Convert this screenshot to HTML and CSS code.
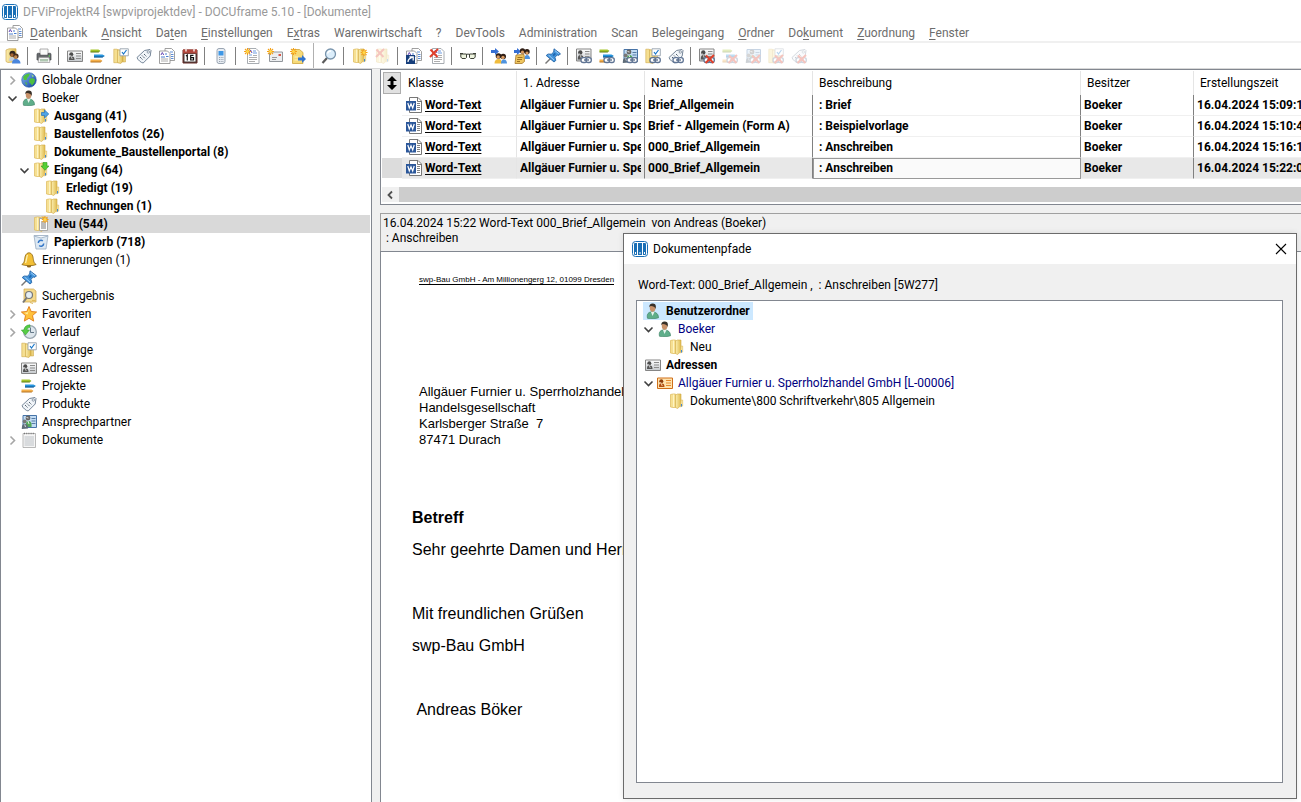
FILE: index.html
```html
<!DOCTYPE html>
<html lang="de">
<head>
  <meta charset="UTF-8" />
  <meta name="viewport" content="width=device-width, initial-scale=1.0"/>
  <title>DFViProjektR4 - DOCUframe 5.10</title>
  <link rel="stylesheet" href="styles.css">
</head>
<body>
  <!-- icon set, 16x16 -->
  <svg class="sprite" aria-hidden="true">
    <defs>
      <linearGradient id="gold" x1="0" x2="1"><stop offset="0" stop-color="#fbeeb0"/><stop offset="1" stop-color="#e0bb4e"/></linearGradient>
      <linearGradient id="sea" x1="0" x2="1" y2="1"><stop offset="0" stop-color="#8cc0f4"/><stop offset="1" stop-color="#0b3a9a"/></linearGradient>
      <linearGradient id="steel" y2="1" x2="0"><stop offset="0" stop-color="#fff"/><stop offset="1" stop-color="#c4c8cc"/></linearGradient>
    </defs>
    <symbol id="app" viewBox="0 0 16 16">
      <rect x=".5" y=".5" width="15" height="15" rx="3" fill="#fff" stroke="#1a6fb5"/>
      <path d="M2 3q0-1 1-1h2v12H3q-1 0-1-1zM6 2h4v12H6zM11 2h2q1 0 1 1v10q0 1-1 1h-2z" fill="#1a6fb5"/>
      <path d="M3 11h1v2H3zM7.500 11h1v2h-1zM12 11h1v2h-1z" fill="#fff"/>
    </symbol>
    <symbol id="folder" viewBox="0 0 16 16">
      <path d="M1.500 1.500 4 1h2.500v13.500H4l-2.500-.5z" fill="#f6e092" stroke="#dcb95a" stroke-width=".7"/>
      <path d="M4.500 1.500V14" stroke="#fdf3c4"/>
      <path d="M6.500 2 8.500 1h3.500v11.500l-3.500 3-2-1z" fill="url(#gold)" stroke="#d2aa45" stroke-width=".6"/>
      <path d="M12 7h1.700v6l-2.200 1z" fill="#f7e5a4" stroke="#d9b455" stroke-width=".5"/>
      <path d="M12.500 11v2.500" stroke="#3d87d6"/>
    </symbol>
    <symbol id="folder-out" viewBox="0 0 16 16">
      <use href="#folder"/>
      <path d="M8.500 4.500h3V2l4.300 4-4.300 4V7.500h-3z" fill="#4ea3e6" stroke="#2872b8" stroke-width=".7"/>
    </symbol>
    <symbol id="folder-in" viewBox="0 0 16 16">
      <use href="#folder"/>
      <path d="M10 .5h4v3.500h2L12 8.300 8 4h2z" fill="#55cf35" stroke="#2f9c1c" stroke-width=".6"/>
    </symbol>
    <symbol id="spark" viewBox="0 0 16 16">
      <path d="M3.500 0v7M0 3.500h7M1 1l5 5M6 1 1 6" stroke="#f3a21b" stroke-width="1.100"/>
      <circle cx="3.500" cy="3.500" r="1.500" fill="#ffd84a"/>
    </symbol>
    <symbol id="folder-doc" viewBox="0 0 16 16">
      <use href="#folder"/>
      <path d="M6.500 2.500h8v12h-8z" fill="#fff" stroke="#999" stroke-width=".8"/>
      <path d="M8 6h5M8 8h5M8 10h5M8 12h5" stroke="#555" stroke-width=".8"/>
      <use href="#spark" x="8.500" y="0"/>
    </symbol>
    <symbol id="folder-new" viewBox="0 0 16 16">
      <use href="#folder"/>
      <use href="#spark" x="8.500" y="1"/>
    </symbol>
    <symbol id="globe" viewBox="0 0 16 16">
      <circle cx="8" cy="8" r="7.300" fill="url(#sea)" stroke="#2a5cae" stroke-width=".6"/>
      <path d="M2 5c2-3 4-3.500 7-3.500L8 4 6.500 5.500l-1 2.500L3 8zM8.500 7l3-1 2.500 1.500-.5 3-2.500 3-1-1.500L8 10zM4 10l2 1-.5 2.500z" fill="#4fc040"/>
      <path d="M10.500 2.500 13 4l-1.500 1.200z" fill="#9be37c"/>
    </symbol>
    <symbol id="user" viewBox="0 0 16 16">
      <path d="M2.500 15.300c-1-4.500 1-6.300 4.500-6.500 4 .2 6.500 2 6.500 6-3.300 1.100-7.700 1.200-11 .5z" fill="#5fae8a" stroke="#327a5b" stroke-width=".6"/>
      <path d="m6 9 1.500 4L9.500 9z" fill="#e8f4ee"/>
      <ellipse cx="7.600" cy="5" rx="2.800" ry="3.800" fill="#c9926a"/>
      <path d="M4.300 4.500C4 1.500 5.600.2 8 .4c2.800.2 3.500 2.300 2.500 5.600C10 3.700 8 3 6 3c-.8 0-1 .5-1.700 1.500z" fill="#383028"/>
    </symbol>
    <symbol id="bin" viewBox="0 0 16 16">
      <path d="M1 1.500h14l-2 13.500H3z" fill="#dce8f3" stroke="#98abc0" stroke-width=".8"/>
      <path d="M1 2 8 4l7-2" fill="#f7fbff" stroke="#98abc0" stroke-width=".8"/>
      <path d="M5.300 9a2.700 2.700 0 0 1 4.500-2M10.700 9.500a2.700 2.700 0 0 1-4.500 2" fill="none" stroke="#3477c8" stroke-width="1.500"/>
    </symbol>
    <symbol id="bell" viewBox="0 0 16 16">
      <ellipse cx="8" cy="14" rx="2.200" ry="1.500" fill="#90651a"/>
      <path d="M.8 12.500C4 11 3.200 7 4.300 4 5 2 6.500.8 8 .8s3 1.200 3.700 3.200c1 3 .3 7 3.500 8.500-3 1.600-11.400 1.600-14.400 0z" fill="#f2bf36" stroke="#8a6414" stroke-width=".8"/>
      <path d="M6.500 3c-1 2-.8 5-2 8" stroke="#fff2b5" stroke-width="1.300" fill="none"/>
    </symbol>
    <symbol id="pin" viewBox="0 0 16 16">
      <path d="M.5 15.500 6 10" stroke="#777" stroke-width="1.400"/>
      <path d="m9 .8 6.500 5L14 7.300l-1.800-.3-2.200 2.300.8 3.200L9 14 1.200 7.500 3 6l3.300.2L8.700 4z" fill="#4596dc" stroke="#1c5c9f" stroke-width=".8"/>
      <path d="m9.800 2.500 4 3.200M3.500 7l5.500 5" stroke="#aad6fa" stroke-width=".9"/>
      <path d="m7.500 7 2-2.200 1.500 1.200-2.200 2.500z" fill="#1f69b4"/>
    </symbol>
    <symbol id="search-folder" viewBox="0 0 16 16">
      <path d="M3 1h9.500l2.500 2v11H3z" fill="#f4d98b" stroke="#cfa64a" stroke-width=".7"/>
      <path d="M5.500 10 2 14.500" stroke="#777" stroke-width="2"/>
      <circle cx="8" cy="7" r="3.500" fill="#e4eef5" stroke="#777" stroke-width="1.200"/>
      <path d="M11 12.500h3.500M9 14.500l3 1" stroke="#dfb95c"/>
    </symbol>
    <symbol id="star" viewBox="0 0 16 16">
      <path d="m8 .5 2.200 5 5.400.5-4.100 3.600 1.200 5.500L8 12.300l-4.700 2.800 1.200-5.500L.4 6l5.400-.5z" fill="#ffc13b" stroke="#e07a14" stroke-width=".9"/>
      <path d="M8 3 6.500 6.500l-3.200.3 3.200 1.700z" fill="#fff0a6"/>
    </symbol>
    <symbol id="history" viewBox="0 0 16 16">
      <circle cx="9" cy="8" r="6.300" fill="#dde6ec" stroke="#99a6b0" stroke-width="1.300"/>
      <path d="M9.500 3.500v5H13" fill="none" stroke="#647888"/>
      <path d="M9 .8C5 1 3.500 3 3 6H.3L4.500 11l4-5H6c.2-1.500 1.200-2.500 3-2.700z" fill="#56cc45" stroke="#359c2a" stroke-width=".5"/>
    </symbol>
    <symbol id="process" viewBox="0 0 16 16">
      <path d="M.8 1.200H4l2 1v12.500H.8z" fill="#f5df91" stroke="#d0aa4a" stroke-width=".6"/>
      <path d="M4.500 2h5.500v11.500l-2.500 2-3-1z" fill="url(#gold)" stroke="#c9a13c" stroke-width=".6"/>
      <path d="M10 7.500h2.500v6.500H10z" fill="#ecd17a" stroke="#c9a13c" stroke-width=".5"/>
      <path d="M7 .8h8.300v7H7z" fill="#fff" stroke="#96a2ad" stroke-width=".9"/>
      <path d="m9 4 1.500 2L13.500 2" fill="none" stroke="#1876c9" stroke-width="1.200"/>
    </symbol>
    <symbol id="card" viewBox="0 0 16 16">
      <path d="M.5 3h15v10.500H.5z" fill="url(#steel)" stroke="#858585"/>
      <circle cx="4.300" cy="6.300" r="2" fill="#4c4c4c"/>
      <path d="M2 12c0-4 1.500-4 3-3.500 1.800 0 2.500 1 2.500 3.500z" fill="#555"/>
      <path d="m3.500 7 1.800 4" stroke="#ddd" stroke-width=".8"/>
      <path d="M9 5.500h5M9 8h5M9 10.500h5" stroke="#8b8b8b"/>
    </symbol>
    <symbol id="card-orange" viewBox="0 0 16 16">
      <path d="M.5 3h15v10.500H.5z" fill="#ffe3ae" stroke="#cf6f19"/>
      <circle cx="4.300" cy="6.300" r="2" fill="#8d3d0b"/>
      <path d="M2 12c0-4 1.500-4 3-3.500 1.800 0 2.500 1 2.500 3.500z" fill="#b14f10"/>
      <path d="m3.500 7 1.800 4" stroke="#ffe9c8" stroke-width=".8"/>
      <path d="M9 5.500h5M9 8h5M9 10.500h5" stroke="#e58a2c"/>
    </symbol>
    <symbol id="gantt" viewBox="0 0 16 16">
      <path d="M.5 1.500h8l2 1.500-2 1H.5z" fill="#a6c52a"/><path d="M.5 4h8l1-.8" stroke="#5c7a10" fill="none"/>
      <path d="M4 6.500h8.500L15 8l-2.500 1.200H4z" fill="#2596e0"/><path d="M4 9h8.500l1-.8" stroke="#0d4c84" fill="none"/>
      <path d="M.5 11.500h10l2 1.500-2 1H.5z" fill="#f5b04a"/><path d="M.5 14h10l1-.8" stroke="#b47320" fill="none"/>
    </symbol>
    <symbol id="tag" viewBox="0 0 16 16">
      <path d="m1 9.500 7.500-7L14 1.500l1 1-.8 5.500-7 7c-1.700 0-6-3.500-6.200-5.500z" fill="#f1f5f9" stroke="#66788c" stroke-width=".9"/>
      <circle cx="12.300" cy="4" r="1.200" fill="#fff" stroke="#66788c" stroke-width=".7"/>
      <path d="m4 9 3 3M6 7.500l3 3M8 6l2.500 2.500" stroke="#435261" stroke-dasharray="1.300 .7"/>
    </symbol>
    <symbol id="contact" viewBox="0 0 16 16">
      <path d="M2 1.500h13.500v12H2z" fill="#c2dcf4" stroke="#4774a8"/>
      <path d="M10.500 4.500h4M10.500 7h4M10.500 9.500h4" stroke="#577ca5"/>
      <circle cx="7" cy="4" r="2.400" fill="#666"/>
      <circle cx="3.700" cy="7.500" r="2" fill="#777"/>
      <path d="M4.500 13c0-4 1-6 3-6s3.500 1.500 3 6z" fill="#55a85b"/>
      <path d="M.8 15c0-4 1-5 3-5s3.300 1 3.300 4.500z" fill="#5d6b78"/>
      <path d="m7 7 1 3M3.700 10.500l.8 2.500M5.500 3.500l2 .5" stroke="#fff" stroke-width=".8"/>
    </symbol>
    <symbol id="notepad" viewBox="0 0 16 16">
      <path d="M2 1.500h12.500v14H2z" fill="#f5f5f5" stroke="#a7a7a7" stroke-width=".8"/>
      <path d="M3.500 5h9.500M3.500 7h9.500M3.500 9h9.500M3.500 11h9.500M3.500 13h9.500" stroke="#b7bcc2" stroke-width=".9"/>
      <path d="M3 1.500h11" stroke="#777" stroke-width="1.500" stroke-dasharray="1 1.200"/>
    </symbol>
    <symbol id="doc" viewBox="0 0 16 16">
      <path d="M.5.5h8.500l3 3v12H.5z" fill="#fff" stroke="#92989e" stroke-width=".8"/>
      <path d="m2 5 1.500-3L5 5" fill="none" stroke="#6849b6"/>
      <path d="M6 3h3M6 5h4M2 7h3" stroke="#6c9be0"/><path d="M6 7.500h4M2 9.500h8M2 11.500h8M2 13.500h6" stroke="#999" stroke-width=".8"/>
    </symbol>
    <symbol id="docs" viewBox="0 0 16 16">
      <path d="M6 .5h6.500l3 3v9H6z" fill="#fff" stroke="#888" stroke-width=".8"/>
      <path d="M11 4h3M12 6.500h2.500M12 8.500h2.500M12 10.500h2.500" stroke="#4a7fd0" stroke-width=".9"/>
      <path d="M.5 3h8l2.500 2.500v10H.5z" fill="#fff" stroke="#888" stroke-width=".8"/>
      <path d="m2 7 1.300-2.500L4.700 7" fill="none" stroke="#6646b3"/>
      <path d="M6 6h2M2 9h4M7 8.500h2.500" stroke="#4a7fd0"/><path d="M2 11h7M2 13h7" stroke="#999" stroke-width=".8"/>
    </symbol>
    <symbol id="calendar" viewBox="0 0 16 16">
      <path d="M1 2h14v13H1z" fill="#453a38" stroke="#682c28"/>
      <path d="M1 1.500h14v4H1z" fill="#b0463c"/>
      <path d="M4 .5v3M12 .5v3" stroke="#f8e7e3" stroke-width="1.500"/>
      <path d="M2.500 6h11v7.500h-11z" fill="#fff"/>
      <path d="m4 8 1.300-1v5.500M11.500 7.300H8.700v4.700h2.800V9.700H9" fill="none" stroke="#111" stroke-width="1.200"/>
    </symbol>
    <symbol id="phone" viewBox="0 0 16 16">
      <rect x="4" y=".5" width="8" height="15" rx="2" fill="#e8edf3" stroke="#9aa5b2"/>
      <path d="M5.500 3h5v4.500h-5z" fill="#3e97e5"/>
      <path d="M6 9.500h4.500M6 11.500h4.500M6 13.500h4.500" stroke="#98a3af" stroke-dasharray="1 .7"/>
    </symbol>
    <symbol id="printer" viewBox="0 0 16 16">
      <path d="M4 1h8v6H4z" fill="#fafafa" stroke="#999" stroke-width=".8"/>
      <path d="M1 6.500C1 5 2 5 4 5.500v2h8v-2c2-.5 3-.5 3 1V12H1z" fill="#686b6e" stroke="#45484b" stroke-width=".7"/>
      <path d="M3 9.500h10l.8 5H2.200z" fill="#f4f4f4" stroke="#999" stroke-width=".7"/>
      <path d="M4 11h8v2.500H4z" fill="#aec7b0"/><circle cx="13.300" cy="8" r=".8" fill="#60d35a"/>
    </symbol>
    <symbol id="user-folder" viewBox="0 0 16 16">
      <path d="M1 2 4 .8h7v13l-8 .7-2-1z" fill="url(#gold)" stroke="#d0ab50" stroke-width=".7"/>
      <circle cx="7.500" cy="5.800" r="3" fill="#33261e"/><circle cx="7" cy="7" r="1.800" fill="#a86835"/>
      <path d="M4 13c0-3 1-4 3-4s4 1 4 4z" fill="#c6cdd4"/>
      <circle cx="11" cy="8" r="2.600" fill="#4a3020"/><circle cx="10.700" cy="9" r="1.700" fill="#c38950"/>
      <path d="M7 15.500c0-3 1.500-4.500 4-4.500s4.500 1.500 4.500 4.500z" fill="#4a86dd"/>
    </symbol>
    <symbol id="new-doc" viewBox="0 0 16 16">
      <use href="#doc" x="3" y="0"/><use href="#spark"/>
    </symbol>
    <symbol id="new-mail" viewBox="0 0 16 16">
      <path d="M2.500 4h13v9.500h-13z" fill="#eceef0" stroke="#92979c"/>
      <path d="M11.500 6h2.500v2h-2.500z" fill="#d85746"/><path d="M5 9.500h5M5 11.500h4" stroke="#999"/>
      <use href="#spark"/>
    </symbol>
    <symbol id="new-move" viewBox="0 0 16 16">
      <path d="M2.500 1.500h7l3.500 3v11H2.500z" fill="#f6da78" stroke="#cfa63c" stroke-width=".8"/><path d="M4.500 9h4M4.500 12h6" stroke="#fff2b8"/>
      <path d="M8 9.500h4V7l4 4-4 4v-2.500H8z" fill="#3274ce"/>
      <use href="#spark"/>
    </symbol>
    <symbol id="lens" viewBox="0 0 16 16">
      <path d="M6 10 1.500 15" stroke="#5b5b5b" stroke-width="2.200"/>
      <circle cx="9.500" cy="6" r="5" fill="#dceefb" stroke="#7994ac" stroke-width="1.300"/>
      <path d="M6.500 5.500C7 3.500 8.500 3 10 3" fill="none" stroke="#fff" stroke-width="1.300"/>
    </symbol>
    <symbol id="redx" viewBox="0 0 16 16">
      <path d="m1.500 1.500 7 7.500M9 1 1 9" stroke="#e0402b" stroke-width="2"/>
    </symbol>
    <symbol id="folder-del" viewBox="0 0 16 16">
      <use href="#folder"/><use href="#redx"/>
    </symbol>
    <symbol id="docs-link" viewBox="0 0 16 16">
      <use href="#docs"/>
      <path d="M0 7h9v9H0z" fill="#173f7c"/><path d="M2 14c0-2.500 1-3 4.500-5M3.500 8.800h3.700v3.700" fill="none" stroke="#fff" stroke-width="1.300"/>
    </symbol>
    <symbol id="docs-del" viewBox="0 0 16 16">
      <use href="#doc" x="3"/><use href="#redx"/>
    </symbol>
    <symbol id="glasses" viewBox="0 0 16 16">
      <path d="M0 5.500h3M13 5.500h3M6.500 6.500q1.500-1 3 0" fill="none" stroke="#3c4036"/>
      <path d="M.8 6h5.700v3.500l-1 1H2L.8 9zM9.500 6h5.700v3l-1.200 1.500h-3.500l-1-1z" fill="#eef4df" stroke="#3c4036"/>
    </symbol>
    <symbol id="people" viewBox="0 0 16 16">
      <path d="M0 2h4V0l4 3.500L4 7V5H0z" fill="#366fd3"/>
      <circle cx="7.500" cy="8" r="2.800" fill="#2e1d14"/><circle cx="12.200" cy="8.500" r="2.800" fill="#2e1d14"/>
      <circle cx="7.200" cy="9" r="1.700" fill="#d79a62"/><circle cx="12" cy="9.500" r="1.700" fill="#d79a62"/>
      <path d="M3.500 15.500c0-3 1.500-4.500 4-4.500s3.500 2 3.500 4.500z" fill="#f0bc3d"/><path d="M10 15.500c0-3 1-4 3-4s3 2 3 4z" fill="#4e93df"/>
    </symbol>
    <symbol id="people-doc" viewBox="0 0 16 16">
      <path d="M0 2h3V0l4 3.500L3 7V5H0z" fill="#366fd3"/>
      <circle cx="8.500" cy="3" r="2.700" fill="#2e1d14"/><circle cx="13" cy="3.800" r="2.700" fill="#2e1d14"/>
      <circle cx="8.500" cy="4.200" r="1.600" fill="#d79a62"/><circle cx="13" cy="5" r="1.600" fill="#d79a62"/>
      <path d="M10.500 11c0-3 1-4 2.500-4s3 1.500 3 4z" fill="#4e93df"/>
      <path d="m2 7 8-.5.5 7L8 15.500H1z" fill="#eec55e" stroke="#a8792a" stroke-width=".8"/>
      <path d="M3.500 9.500h5M3 11.500h5M3 13.500h3" stroke="#94671e" stroke-width=".9"/>
    </symbol>
    <symbol id="chain" viewBox="0 0 16 16">
      <rect x="5" y="9.700" width="6" height="4.800" rx="2.200" fill="#fff" stroke="#5f7494" stroke-width="1.300"/>
      <rect x="10" y="9.700" width="5.300" height="4.800" rx="2.200" fill="#fff" stroke="#5f7494" stroke-width="1.300"/>
      <path d="M8 12h5" stroke="#4f6586" stroke-width="1.300"/>
    </symbol>
    <symbol id="cross" viewBox="0 0 16 16">
      <path d="m7 7.500 7.500 7.500M15 7l-8.500 8" stroke="#e0402b" stroke-width="2"/>
    </symbol>
    <symbol id="card-tall" viewBox="0 0 16 16">
      <path d="M.5 1h14.500v12H.5z" fill="url(#steel)" stroke="#858585"/>
      <circle cx="4.300" cy="4.500" r="2.200" fill="#4c4c4c"/>
      <path d="M1.800 11.500c0-4.500 1.500-4.700 3.200-4.200 1.800 0 2.700 1.200 2.700 4.200z" fill="#555"/>
      <path d="m3.500 5.500 1.800 4.500" stroke="#ddd" stroke-width=".8"/>
      <path d="M9 3.500h4.500M9 6h4.500M9 8.500h4.500" stroke="#8b8b8b"/>
    </symbol>
    <symbol id="word" viewBox="0 0 16 16">
      <path d="M3.500.5h8.500l3.500 3.500v11.500h-12z" fill="#fff" stroke="#777"/>
      <path d="M11.500.5v4h4" fill="none" stroke="#777"/>
      <path d="M11 6.500h3M11 8.500h3M11 10.500h3M11 12.500h3" stroke="#777" stroke-width=".9"/>
      <path d="M0 4h10v9.500H0z" fill="#2b579a"/>
      <path d="m1.800 6 1.500 5L5 6.800 6.700 11l1.500-5" fill="none" stroke="#fff" stroke-width="1.200"/>
    </symbol>
    <symbol id="right" viewBox="0 0 16 16"><path d="m5.500 4.500 4 4-4 4" fill="none" stroke="#a6a6a6" stroke-width="1.600"/></symbol>
    <symbol id="down" viewBox="0 0 16 16"><path d="m3.500 6.500 4 4 4-4" fill="none" stroke="#404040" stroke-width="1.600"/></symbol>
  </svg>

  <div class="app">
    <header class="titlebar">
      <svg class="icon"><use href="#app"/></svg>
      <span>DFViProjektR4 [swpviprojektdev] - DOCUframe 5.10 - [Dokumente]</span>
    </header>

    <nav class="menubar" aria-label="Hauptmenü">
      <svg class="icon"><use href="#docs"/></svg>
      <button><u>D</u>atenbank</button>
      <button><u>A</u>nsicht</button>
      <button>Da<u>t</u>en</button>
      <button><u>E</u>instellungen</button>
      <button>E<u>x</u>tras</button>
      <button>Warenwirtschaft</button>
      <button>?</button>
      <button>DevTools</button>
      <button>Administration</button>
      <button>Scan</button>
      <button>Belegeingang</button>
      <button><u>O</u>rdner</button>
      <button>Do<u>k</u>ument</button>
      <button><u>Z</u>uordnung</button>
      <button><u>F</u>enster</button>
    </nav>

    <div class="toolbar" role="toolbar" aria-label="Werkzeuge">
      <button aria-label="Benutzerordner"><svg class="icon"><use href="#user-folder"/></svg></button>
      <i class="sep"></i>
      <button aria-label="Drucken"><svg class="icon"><use href="#printer"/></svg></button>
      <i class="sep"></i>
      <button aria-label="Adressen"><svg class="icon"><use href="#card"/></svg></button>
      <button aria-label="Projekte"><svg class="icon"><use href="#gantt"/></svg></button>
      <button aria-label="Vorgänge"><svg class="icon"><use href="#process"/></svg></button>
      <button aria-label="Produkte"><svg class="icon"><use href="#tag"/></svg></button>
      <button aria-label="Dokumente"><svg class="icon"><use href="#docs"/></svg></button>
      <button aria-label="Kalender"><svg class="icon"><use href="#calendar"/></svg></button>
      <i class="sep"></i>
      <button aria-label="Telefon"><svg class="icon"><use href="#phone"/></svg></button>
      <i class="sep"></i>
      <button aria-label="Neues Dokument"><svg class="icon"><use href="#new-doc"/></svg></button>
      <button aria-label="Neue Nachricht"><svg class="icon"><use href="#new-mail"/></svg></button>
      <button aria-label="Neue Weiterleitung"><svg class="icon"><use href="#new-move"/></svg></button>
      <i class="sep split"></i>
      <button aria-label="Suchen"><svg class="icon"><use href="#lens"/></svg></button>
      <i class="sep"></i>
      <button aria-label="Neuer Ordner"><svg class="icon"><use href="#folder-new"/></svg></button>
      <button aria-label="Ordner löschen" disabled><svg class="icon"><use href="#folder-del"/></svg></button>
      <i class="sep"></i>
      <button aria-label="Dokument verknüpfen"><svg class="icon"><use href="#docs-link"/></svg></button>
      <button aria-label="Dokument löschen"><svg class="icon"><use href="#docs-del"/></svg></button>
      <i class="sep"></i>
      <button aria-label="Ansehen"><svg class="icon"><use href="#glasses"/></svg></button>
      <i class="sep"></i>
      <button aria-label="Weiterleiten"><svg class="icon"><use href="#people"/></svg></button>
      <button aria-label="Verteilen"><svg class="icon"><use href="#people-doc"/></svg></button>
      <i class="sep"></i>
      <button aria-label="Anheften"><svg class="icon"><use href="#pin"/></svg></button>
      <i class="sep"></i>
      <button aria-label="Adresse zuordnen"><svg class="icon"><use href="#card-tall"/><use href="#chain"/></svg></button>
      <button aria-label="Projekt zuordnen"><svg class="icon"><use href="#gantt"/><use href="#chain"/></svg></button>
      <button aria-label="Ansprechpartner zuordnen"><svg class="icon"><use href="#contact"/><use href="#chain"/></svg></button>
      <button aria-label="Vorgang zuordnen"><svg class="icon"><use href="#process"/><use href="#chain"/></svg></button>
      <button aria-label="Produkt zuordnen"><svg class="icon"><use href="#tag"/><use href="#chain"/></svg></button>
      <i class="sep"></i>
      <button aria-label="Adresse lösen"><svg class="icon"><use href="#card-tall"/><use href="#chain"/><use href="#cross"/></svg></button>
      <button aria-label="Projekt lösen" disabled><svg class="icon"><use href="#gantt"/><use href="#chain"/><use href="#cross"/></svg></button>
      <button aria-label="Ansprechpartner lösen" disabled><svg class="icon"><use href="#contact"/><use href="#chain"/><use href="#cross"/></svg></button>
      <button aria-label="Vorgang lösen" disabled><svg class="icon"><use href="#process"/><use href="#chain"/><use href="#cross"/></svg></button>
      <button aria-label="Produkt lösen" disabled><svg class="icon"><use href="#tag"/><use href="#chain"/><use href="#cross"/></svg></button>
    </div>

    <main class="workspace">
      <aside class="sidebar">
        <ul class="tree">
          <li><button class="toggle" aria-label="Öffnen"><svg class="icon"><use href="#right"/></svg></button><svg class="icon"><use href="#globe"/></svg><span>Globale Ordner</span></li>
          <li><button class="toggle" aria-label="Schließen"><svg class="icon"><use href="#down"/></svg></button><svg class="icon"><use href="#user"/></svg><span>Boeker</span></li>
          <li class="lvl-1 unread"><svg class="icon"><use href="#folder-out"/></svg><span>Ausgang (41)</span></li>
          <li class="lvl-1 unread"><svg class="icon"><use href="#folder"/></svg><span>Baustellenfotos (26)</span></li>
          <li class="lvl-1 unread"><svg class="icon"><use href="#folder"/></svg><span>Dokumente_Baustellenportal (8)</span></li>
          <li class="lvl-1 unread"><button class="toggle" aria-label="Schließen"><svg class="icon"><use href="#down"/></svg></button><svg class="icon"><use href="#folder-in"/></svg><span>Eingang (64)</span></li>
          <li class="lvl-2 unread"><svg class="icon"><use href="#folder"/></svg><span>Erledigt (19)</span></li>
          <li class="lvl-2 unread"><svg class="icon"><use href="#folder"/></svg><span>Rechnungen (1)</span></li>
          <li class="lvl-1 unread selected"><svg class="icon"><use href="#folder-doc"/></svg><span>Neu (544)</span></li>
          <li class="lvl-1 unread"><svg class="icon"><use href="#bin"/></svg><span>Papierkorb (718)</span></li>
          <li><svg class="icon"><use href="#bell"/></svg><span>Erinnerungen (1)</span></li>
          <li><svg class="icon"><use href="#pin"/></svg></li>
          <li><svg class="icon"><use href="#search-folder"/></svg><span>Suchergebnis</span></li>
          <li><button class="toggle" aria-label="Öffnen"><svg class="icon"><use href="#right"/></svg></button><svg class="icon"><use href="#star"/></svg><span>Favoriten</span></li>
          <li><button class="toggle" aria-label="Öffnen"><svg class="icon"><use href="#right"/></svg></button><svg class="icon"><use href="#history"/></svg><span>Verlauf</span></li>
          <li><svg class="icon"><use href="#process"/></svg><span>Vorgänge</span></li>
          <li><svg class="icon"><use href="#card"/></svg><span>Adressen</span></li>
          <li><svg class="icon"><use href="#gantt"/></svg><span>Projekte</span></li>
          <li><svg class="icon"><use href="#tag"/></svg><span>Produkte</span></li>
          <li><svg class="icon"><use href="#contact"/></svg><span>Ansprechpartner</span></li>
          <li><button class="toggle" aria-label="Öffnen"><svg class="icon"><use href="#right"/></svg></button><svg class="icon"><use href="#notepad"/></svg><span>Dokumente</span></li>
        </ul>
      </aside>

      <section class="content">
        <div class="list">
          <table>
            <colgroup>
              <col class="c-mark"><col class="c-class"><col class="c-address"><col class="c-name"><col class="c-desc"><col class="c-owner"><col>
            </colgroup>
            <thead>
              <tr>
                <th><button class="sort" aria-label="Sortieren"><svg viewBox="0 0 16 20"><path d="M8 3l5 5H9.500v4H13l-5 5-5-5h3.500V8H3z"/></svg></button></th>
                <th>Klasse</th>
                <th>1. Adresse</th>
                <th>Name</th>
                <th>Beschreibung</th>
                <th>Besitzer</th>
                <th>Erstellungszeit</th>
              </tr>
            </thead>
            <tbody>
              <tr>
                <td></td>
                <td><div class="doc-link"><svg class="icon"><use href="#word"/></svg><a href="#">Word-Text</a></div></td>
                <td><div class="clip">Allgäuer Furnier u. Spe</div></td>
                <td>Brief_Allgemein</td>
                <td>: Brief</td>
                <td>Boeker</td>
                <td>16.04.2024 15:09:1</td>
              </tr>
              <tr>
                <td></td>
                <td><div class="doc-link"><svg class="icon"><use href="#word"/></svg><a href="#">Word-Text</a></div></td>
                <td><div class="clip">Allgäuer Furnier u. Spe</div></td>
                <td>Brief - Allgemein (Form A)</td>
                <td>: Beispielvorlage</td>
                <td>Boeker</td>
                <td>16.04.2024 15:10:4</td>
              </tr>
              <tr>
                <td></td>
                <td><div class="doc-link"><svg class="icon"><use href="#word"/></svg><a href="#">Word-Text</a></div></td>
                <td><div class="clip">Allgäuer Furnier u. Spe</div></td>
                <td>000_Brief_Allgemein</td>
                <td>: Anschreiben</td>
                <td>Boeker</td>
                <td>16.04.2024 15:16:1</td>
              </tr>
              <tr class="current">
                <td></td>
                <td><div class="doc-link"><svg class="icon"><use href="#word"/></svg><a href="#">Word-Text</a></div></td>
                <td><div class="clip">Allgäuer Furnier u. Spe</div></td>
                <td>000_Brief_Allgemein</td>
                <td class="focus">: Anschreiben</td>
                <td>Boeker</td>
                <td>16.04.2024 15:22:0</td>
              </tr>
            </tbody>
          </table>
          <div class="scrollbar">
            <button aria-label="Nach links"><svg class="icon" viewBox="0 0 16 16"><path d="M10 4.500 6.500 8l3.500 3.500" fill="none" stroke="#505050" stroke-width="1.800"/></svg></button>
            <div class="thumb"></div>
          </div>
        </div>

        <div class="info">
          <p>16.04.2024 15:22 Word-Text 000_Brief_Allgemein&nbsp; von Andreas (Boeker)</p>
          <p>&nbsp;: Anschreiben</p>
        </div>

        <article class="letter">
          <p class="sender">swp-Bau GmbH - Am Millionengerg 12, 01099 Dresden</p>
          <address>
            Allgäuer Furnier u. Sperrholzhandel<br>
            Handelsgesellschaft<br>
            Karlsberger Straße&nbsp; 7<br>
            87471 Durach
          </address>
          <h2>Betreff</h2>
          <p class="greeting">Sehr geehrte Damen und Herren,</p>
          <p>Mit freundlichen Grüßen</p>
          <p class="company">swp-Bau GmbH</p>
          <p>&nbsp;Andreas Böker</p>
        </article>
      </section>
    </main>

    <div class="dialog" role="dialog" aria-labelledby="dialog-title">
      <header>
        <svg class="icon"><use href="#app"/></svg>
        <span id="dialog-title">Dokumentenpfade</span>
        <button aria-label="Schließen"><svg viewBox="0 0 12 12"><path d="m1 1 10 10M11 1 1 11" stroke="#000" stroke-width="1.100"/></svg></button>
      </header>
      <div class="dialog-body">
        <p>Word-Text: 000_Brief_Allgemein ,&nbsp; : Anschreiben [5W277]</p>
        <ul class="tree paths">
          <li class="group marked"><svg class="icon"><use href="#user"/></svg><span>Benutzerordner</span></li>
          <li class="owner"><button class="toggle" aria-label="Schließen"><svg class="icon"><use href="#down"/></svg></button><svg class="icon"><use href="#user"/></svg><span>Boeker</span></li>
          <li class="lvl-1"><svg class="icon"><use href="#folder"/></svg><span>Neu</span></li>
          <li class="group"><svg class="icon"><use href="#card"/></svg><span>Adressen</span></li>
          <li class="owner"><button class="toggle" aria-label="Schließen"><svg class="icon"><use href="#down"/></svg></button><svg class="icon"><use href="#card-orange"/></svg><span>Allgäuer Furnier u. Sperrholzhandel GmbH [L-00006]</span></li>
          <li class="lvl-1"><svg class="icon"><use href="#folder"/></svg><span>Dokumente\800 Schriftverkehr\805 Allgemein</span></li>
        </ul>
      </div>
    </div>
  </div>
</body>
</html>
```
FILE: styles.css
```css
* {
  box-sizing: border-box;
}

body {
  margin: 0;
  font-family: Roboto, "Open Sans", sans-serif;
  font-size: 12px;
  line-height: 18px;
  color: #000;
  background: #f0f0f0;
  overflow: hidden;
}

p, h2, ul {
  margin: 0;
  padding: 0;
}

button {
  border: 0;
  padding: 0;
  background: none;
  font: inherit;
  color: inherit;
}

.sprite {
  position: absolute;
  width: 0;
  height: 0;
}

.icon {
  width: 16px;
  height: 16px;
  flex: none;
  display: block;
}

.app {
  position: relative;
  display: flex;
  flex-direction: column;
  height: 100vh;
}

.titlebar {
  display: flex;
  align-items: center;
  gap: 5px;
  height: 24px;
  padding-left: 2px;
  background: #fff;
  color: #999;
}

/* menu and toolbar */
.menubar {
  display: flex;
  align-items: center;
  gap: 14px;
  height: 19px;
  padding-left: 7px;
  background: #fff;
  border-bottom: 2px solid #f0f0f0;
  color: #6d6d6d;
  white-space: nowrap;
}

.menubar .icon {
  margin-right: -7px;
}

.menubar u {
  text-underline-offset: 2px;
}

.toolbar {
  display: flex;
  align-items: center;
  height: 26px;
  padding-left: 2px;
  background: #fff;
  border-bottom: 1px solid #d8d8d8;
}

.toolbar button {
  width: 23px;
  padding-left: 3px;
}

.toolbar button:disabled {
  opacity: 0.3;
}

.sep {
  width: 6px;
  height: 18px;
  margin-left: 2px;
  border-left: 1px solid #808080;
}

.sep.split {
  width: 5px;
  height: 25px;
  margin-left: 3px;
  border-color: #b0b0b0;
}

/* folder tree */
.workspace {
  flex: 1;
  display: flex;
  gap: 8px;
  min-height: 0;
}

.sidebar {
  width: 372px;
  flex: none;
  padding: 1px;
  background: #fff;
  border: 1px solid #828790;
  border-bottom: 0;
}

.tree {
  list-style: none;
}

.tree li {
  display: flex;
  align-items: center;
  height: 18px;
  padding-left: 19px;
  white-space: nowrap;
}

.tree .lvl-1 {
  padding-left: 31px;
}

.tree .lvl-2 {
  padding-left: 43px;
}

.tree span {
  margin-left: 5px;
}

.toggle {
  width: 16px;
  margin-left: -16px;
}

.unread {
  font-weight: bold;
}

.selected {
  background: #d9d9d9;
}

/* document list */
.content {
  flex: 1;
  min-width: 0;
  display: flex;
  flex-direction: column;
}

.list {
  background: #fff;
  border: 1px solid #828790;
  border-right: 0;
  padding: 1px 0 2px 1px;
  margin-bottom: 8px;
}

table {
  width: 100%;
  table-layout: fixed;
  border-collapse: separate;
  border-spacing: 0;
}

.c-mark { width: 20px; }
.c-class { width: 115px; }
.c-address { width: 128px; }
.c-name { width: 168px; }
.c-desc { width: 268px; }
.c-owner { width: 113px; }

th {
  height: 24px;
  padding: 0 0 0 6px;
  border-right: 1px solid #e5e5e5;
  font-weight: normal;
  text-align: left;
  white-space: nowrap;
}

th:first-child {
  padding: 0 0 0 1px;
  border-right: 0;
}

.sort {
  display: block;
  width: 18px;
  height: 22px;
  background: #e1e1e1;
  border: 1px solid #adadad;
}

.sort svg {
  display: block;
  width: 16px;
  height: 20px;
}

td {
  height: 21px;
  padding: 0 3px;
  border-right: 1px solid #808080;
  border-bottom: 1px solid #f0f0f0;
  font-weight: bold;
  white-space: nowrap;
}

td:first-child {
  border-right: 0;
  border-bottom-color: #fff;
}

td:nth-child(2) {
  padding-left: 4px;
  border-right-color: #e5e5e5;
}

td:nth-child(5) {
  padding-left: 6px;
}

th:last-child,
td:last-child {
  border-right: 0;
}

.current td {
  background: #e8e8e8;
}

.current td:first-child {
  background: #dcdcdc;
}

.current .focus {
  background: #fafafa;
  outline: 1px solid #999;
  outline-offset: -1px;
}

.doc-link {
  display: flex;
  align-items: center;
  gap: 3px;
}

.doc-link a {
  color: #000;
  text-underline-offset: 2px;
}

.clip {
  overflow: hidden;
}

.scrollbar {
  display: flex;
  height: 15px;
  margin-top: 8px;
}

.scrollbar button {
  width: 17px;
  background: #f0f0f0;
}

.thumb {
  flex: 1;
  background: #cdcdcd;
}

/* preview */
.info {
  padding: 2px 2px 5px;
  border: 1px solid #a0a0a0;
  border-width: 1px 0 0 1px;
  line-height: 15px;
}

.letter {
  flex: 1;
  padding: 23px 0 0 31px;
  background: #fff;
  border: 1px solid #828790;
  border-width: 1px 0 0 1px;
  font-family: "Liberation Sans", Arial, sans-serif;
  font-size: 16px;
  line-height: 32px;
}

.sender {
  width: max-content;
  margin-left: 7px;
  border-bottom: 1px solid #000;
  font-size: 8px;
  line-height: 9px;
}

address {
  margin: 99px 0 54px 7px;
  font-size: 13px;
  font-style: normal;
  line-height: 16px;
}

h2 {
  font-size: 16px;
}

.greeting,
.company {
  margin-bottom: 32px;
}

/* dialog */
.dialog {
  position: absolute;
  top: 233px;
  right: 4px;
  bottom: 3px;
  left: 623px;
  display: flex;
  flex-direction: column;
  background: #f0f0f0;
  border: 1px solid #6b6b6b;
  box-shadow: 0 0 6px rgba(0, 0, 0, 0.1);
}

.dialog header {
  display: flex;
  align-items: center;
  gap: 5px;
  height: 30px;
  padding: 0 8px;
  background: #fff;
}

.dialog header button {
  width: 13px;
  height: 12px;
  margin-left: auto;
}

.dialog header button svg {
  display: block;
  width: 12px;
  height: 12px;
}

.dialog-body {
  flex: 1;
  display: flex;
  flex-direction: column;
  gap: 6px;
  padding: 12px 13px 15px 12px;
}

.dialog-body p {
  padding-left: 2px;
}

.paths {
  flex: 1;
  padding-top: 1px;
  background: #fff;
  border: 1px solid #828790;
}

.paths .owner {
  padding-left: 20px;
  color: #000080;
}

.paths .lvl-1 {
  padding-left: 32px;
}

.paths .group {
  width: max-content;
  margin-left: 6px;
  padding: 0 3px 0 2px;
  font-weight: bold;
}

.marked {
  background: #cce8ff;
}
```
